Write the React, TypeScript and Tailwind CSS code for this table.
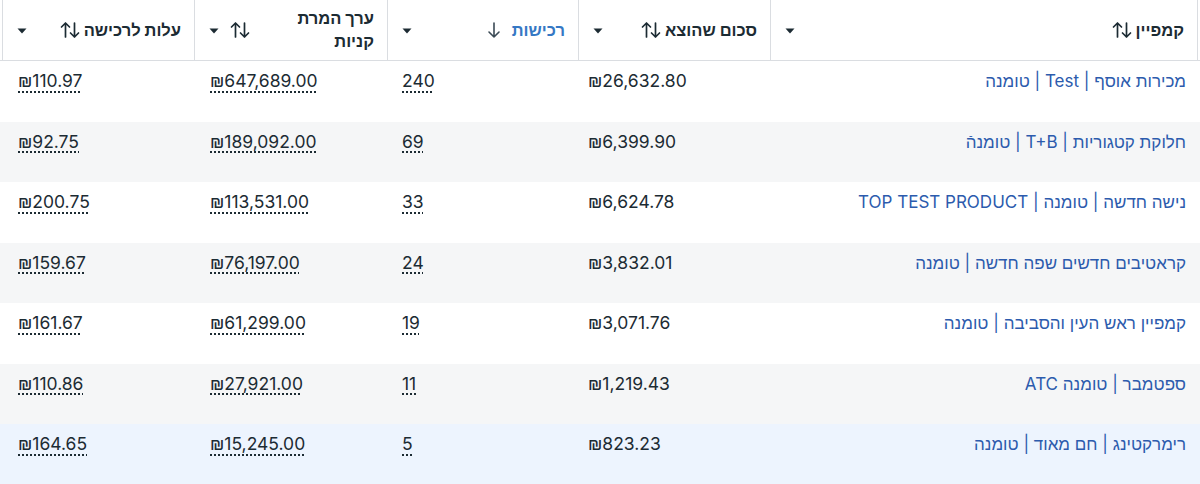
import React from 'react'

type Row = {
  name: string
  spent: string
  purchases: string
  value: string
  cost: string
}

const rows: Row[] = [
  { name: 'מכירות אוסף | Test | טומנה', spent: '₪26,632.80', purchases: '240', value: '₪647,689.00', cost: '₪110.97' },
  { name: 'חלוקת קטגוריות | T+B | טומנהֿ', spent: '₪6,399.90', purchases: '69', value: '₪189,092.00', cost: '₪92.75' },
  { name: 'נישה חדשה | טומנה | TOP TEST PRODUCT', spent: '₪6,624.78', purchases: '33', value: '₪113,531.00', cost: '₪200.75' },
  { name: 'קראטיבים חדשים שפה חדשה | טומנה', spent: '₪3,832.01', purchases: '24', value: '₪76,197.00', cost: '₪159.67' },
  { name: 'קמפיין ראש העין והסביבה | טומנה', spent: '₪3,071.76', purchases: '19', value: '₪61,299.00', cost: '₪161.67' },
  { name: 'ספטמבר | טומנה ATC', spent: '₪1,219.43', purchases: '11', value: '₪27,921.00', cost: '₪110.86' },
  { name: 'רימרקטינג | חם מאוד | טומנה', spent: '₪823.23', purchases: '5', value: '₪15,245.00', cost: '₪164.65' },
]

const rowBg = ['bg-white', 'bg-[#f5f6f7]', 'bg-white', 'bg-[#f5f6f7]', 'bg-white', 'bg-[#f5f6f7]', 'bg-[#edf4fe]']

function SortIcon() {
  return (
    <svg width="20" height="18" viewBox="0 0 20 18" fill="none" stroke="#1c2b33" strokeWidth="1.7" strokeLinecap="round" strokeLinejoin="round">
      <path d="M5.5 16V2M1.5 6l4-4 4 4" />
      <path d="M14.5 2v14M10.5 12l4 4 4-4" />
    </svg>
  )
}

function DownIcon() {
  return (
    <svg width="16" height="18" viewBox="0 0 16 18" fill="none" stroke="#3b4a55" strokeWidth="1.6" strokeLinecap="round" strokeLinejoin="round">
      <path d="M8 2v14M3 11l5 5 5-5" />
    </svg>
  )
}

function Caret() {
  return (
    <svg width="10" height="6" viewBox="0 0 10 6">
      <path d="M0.5 0.5h9L5 5.5z" fill="#1c2b33" />
    </svg>
  )
}

function HeaderCell({ label, sorted, wrap }: { label: string; sorted?: boolean; wrap?: boolean }) {
  return (
    <div className="flex items-center h-[60px] border-l border-[#dadde1] pr-[13px] pl-[14px]">
      <span
        className={`text-[16.5px] font-bold leading-[23px] ${sorted ? 'text-[#3578c4]' : 'text-[#1c2b33]'} ${wrap ? 'w-[100px]' : 'whitespace-nowrap'}`}
      >
        {label}
      </span>
      <span className={sorted ? 'mr-[10px]' : wrap ? 'mr-[24px]' : 'mr-[4px]'}>{sorted ? <DownIcon /> : <SortIcon />}</span>
      <span className="mr-auto pt-[1px]">
        <Caret />
      </span>
    </div>
  )
}

function Num({ children, dotted, pl }: { children: React.ReactNode; dotted?: boolean; pl: string }) {
  return (
    <div className={`${pl} pt-[8px] text-left`} dir="ltr">
      <span
        className={`text-[17.5px] leading-[20px] text-[#1c2b33] ${dotted ? 'underline decoration-dotted decoration-[1.5px] underline-offset-[4px] decoration-[#1c2b33]' : ''}`}
      >
        {children}
      </span>
    </div>
  )
}

export default function App() {
  const cols = 'grid grid-cols-[3px_427px_192px_191px_193px_192px_2px]'
  return (
    <div dir="rtl" className="w-[1200px] h-[484px] overflow-hidden bg-white" style={{ fontFamily: 'Inter, "Liberation Sans", sans-serif' }}>
      {/* Header */}
      <div className={`${cols} border-b border-[#dadde1] bg-white`}>
        <div className="border-l border-[#dadde1]" />
        <HeaderCell label="קמפיין" />
        <HeaderCell label="סכום שהוצא" />
        <HeaderCell label="רכישות" sorted />
        <HeaderCell label="ערך המרת קניות" wrap />
        <HeaderCell label="עלות לרכישה" />
        <div />
      </div>

      {/* Rows */}
      {rows.map((r, i) => (
        <div key={i} className={`${cols} h-[60.5px] ${rowBg[i]}`}>
          <div />
          <div className="pr-[11px] pt-[8px]">
            <span className="text-[17px] leading-[20px] text-[#2c5bad] whitespace-nowrap">{r.name}</span>
          </div>
          <Num pl="pl-[10px]">{r.spent}</Num>
          <Num dotted pl="pl-[15px]">{r.purchases}</Num>
          <Num dotted pl="pl-[16px]">{r.value}</Num>
          <Num dotted pl="pl-[16px]">{r.cost}</Num>
          <div />
        </div>
      ))}
    </div>
  )
}
